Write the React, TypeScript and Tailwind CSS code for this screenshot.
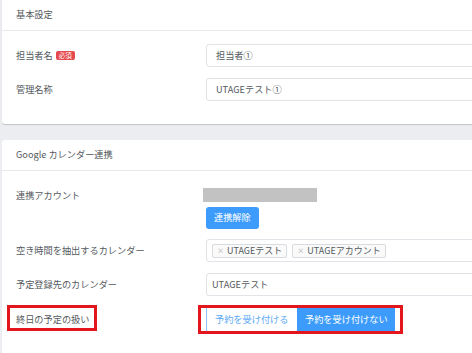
import React from 'react';

const font = { fontFamily: '"Noto Sans CJK JP", "Noto Sans", sans-serif' };

function Label({ children }: { children: React.ReactNode }) {
  return <div className="w-[190px] shrink-0 text-[9.2px] text-[#555a60]">{children}</div>;
}

function TextInput({ value, pad = 'pl-[9px]' }: { value: string; pad?: string }) {
  return (
    <div className={`flex h-[23px] flex-1 items-center rounded-[3px] border border-[#e1e3e8] bg-white ${pad} text-[9.2px] text-[#555a60]`}>
      {value}
    </div>
  );
}

function Tag({ text }: { text: string }) {
  return (
    <span className="flex h-[14px] items-center gap-[3px] rounded-[2px] border border-[#d8dbe0] bg-[#fafafa] px-[4px] text-[9px] text-[#555a60]">
      <span className="text-[7px] text-[#a0a4aa]">×</span>
      {text}
    </span>
  );
}

export default function App() {
  return (
    <div style={font} className="h-[353px] w-[472px] overflow-hidden bg-[#ebedf0] pl-[2px]">
      {/* 基本設定 */}
      <div className="w-[520px] rounded-b-[3px] bg-white shadow-[0_1px_1px_rgba(0,0,0,0.18)]">
        <div className="flex h-[31px] items-center border-b border-[#e6e8eb] pl-[14px] text-[9.2px] text-[#555a60]">
          基本設定
        </div>
        <div className="flex flex-col gap-[11px] pb-[23px] pl-[14px] pt-[13px]">
          <div className="flex items-center">
            <Label>
              <span className="flex items-center gap-[3px]">
                担当者名
                <span className="rounded-[2px] bg-[#e5484d] px-[3px] text-[6.5px] leading-[9px] text-white">必須</span>
              </span>
            </Label>
            <TextInput value="担当者①" />
          </div>
          <div className="flex items-center">
            <Label>管理名称</Label>
            <TextInput value="UTAGEテスト①" />
          </div>
        </div>
      </div>

      {/* Google カレンダー連携 */}
      <div className="mt-[16px] w-[520px] rounded-t-[3px] bg-white pb-[40px]">
        <div className="flex h-[31px] items-center border-b border-[#e6e8eb] pl-[14px] text-[9.2px] text-[#555a60]">
          Google カレンダー連携
        </div>
        <div className="flex flex-col pl-[14px] pt-[17px]">
          <div className="flex items-start">
            <Label>
              <span className="block leading-[14px]">連携アカウント</span>
            </Label>
            <div className="flex flex-col items-start gap-[5px]">
              <div className="-ml-[3px] h-[14px] w-[114px] bg-[#c2c2c2]" />
              <button className="h-[22px] rounded-[3px] bg-[#3d9cfb] px-[8px] text-[9.2px] text-white">連携解除</button>
            </div>
          </div>
          <div className="mt-[10px] flex items-center">
            <Label>空き時間を抽出するカレンダー</Label>
            <div className="flex h-[23px] flex-1 items-center gap-[5px] rounded-[3px] border border-[#e1e3e8] bg-white pl-[5px]">
              <Tag text="UTAGEテスト" />
              <Tag text="UTAGEアカウント" />
            </div>
          </div>
          <div className="mt-[11px] flex items-center">
            <Label>予定登録先のカレンダー</Label>
            <TextInput value="UTAGEテスト" pad="pl-[5px]" />
          </div>
          <div className="mt-[12px] flex items-center">
            <Label>
              <span className="relative block">
                終日の予定の扱い
                <span className="absolute -left-[9px] -top-[8px] h-[26px] w-[90px] border-[3px] border-[#e3161d]" />
              </span>
            </Label>
            <div className="relative flex h-[23px]">
              <span className="absolute -left-[8px] -top-[3px] h-[29px] w-[205px] border-[3px] border-[#e3161d]" />
              <button className="flex w-[91px] items-center border-l border-[#8cc5ff] bg-white pl-[8px] text-[9.2px] text-[#5aa9f7]">
                予約を受け付ける
              </button>
              <button className="flex w-[98px] items-center bg-[#3d9cfb] pl-[8px] text-[9.2px] text-white">
                予約を受け付けない
              </button>
            </div>
          </div>
        </div>
      </div>
    </div>
  );
}
